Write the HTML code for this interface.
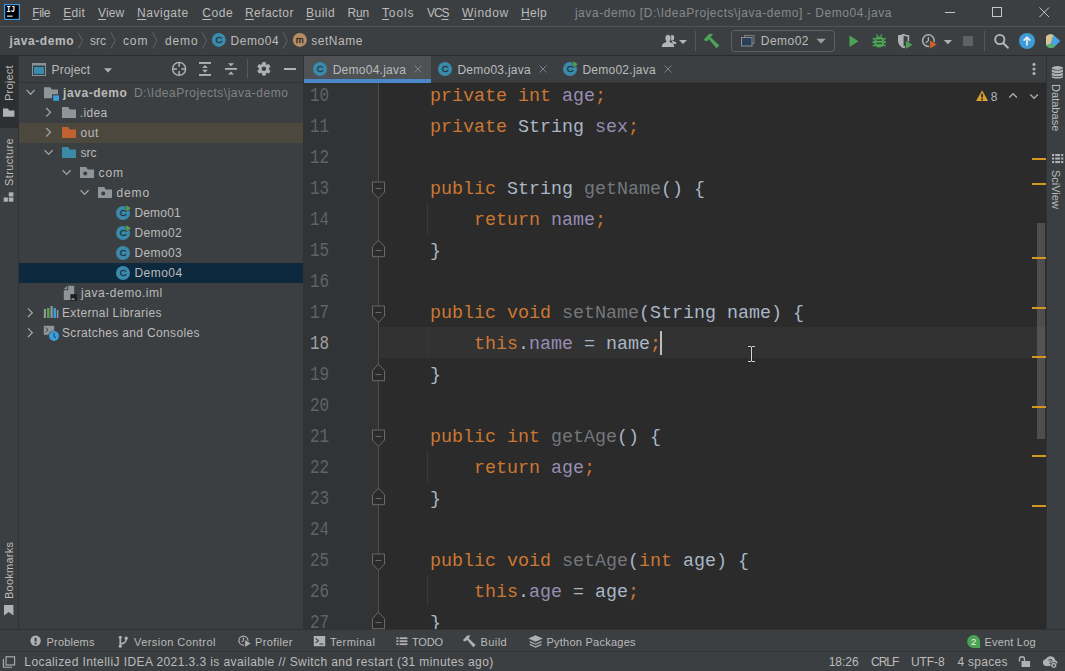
<!DOCTYPE html>
<html lang="en">
<head>
<meta charset="utf-8">
<title>java-demo - Demo04.java</title>
<style>
html,body{margin:0;padding:0;}
body{width:1065px;height:671px;overflow:hidden;background:#3c3f41;position:relative;
  font-family:"Liberation Sans","DejaVu Sans",sans-serif;font-size:12px;color:#bbbbbb;}
.abs{position:absolute;}
.t{position:absolute;white-space:pre;line-height:16px;height:16px;}
.t u{text-decoration:underline;text-decoration-thickness:1px;text-underline-offset:1.5px;}
#icons{position:absolute;left:0;top:0;width:1065px;height:671px;overflow:hidden;pointer-events:none;}
#menuline{left:0;top:26px;width:1065px;height:1px;background:#515354;}
#navline{left:0;top:55px;width:1065px;height:1px;background:#292b2c;}
#lstripe{left:0;top:56px;width:18px;height:574px;background:#3c3f41;border-right:1px solid #323232;}
#lsel{left:0;top:56px;width:18px;height:72px;background:#2d2f30;}
#rstripe{left:1046px;top:56px;width:19px;height:574px;background:#3c3f41;border-left:1px solid #323232;box-sizing:border-box;}
.vt{position:absolute;white-space:pre;font-size:12px;color:#bbbbbb;line-height:16px;height:16px;transform-origin:0 0;}
#proj{left:19px;top:56px;width:284px;height:574px;background:#3c3f41;}
#projhdrline{left:19px;top:82px;width:284px;height:1px;background:#313335;}
#rowout{left:19px;top:123px;width:285px;height:20px;background:#4c483d;}
#rowsel{left:19px;top:263px;width:285px;height:20px;background:#0d293e;}
#projsep{left:303px;top:56px;width:1px;height:574px;background:#323232;}
#tabs{left:304px;top:56px;width:742px;height:27px;background:#3c3f41;}
#tabbl{left:304px;top:82px;width:742px;height:1px;background:#323436;}
#tabact{left:304px;top:56px;width:127px;height:27px;background:#4e5254;}
#tabul{left:304px;top:79px;width:127px;height:4px;background:#4a88c7;}
#editor{left:304px;top:83px;width:742px;height:547px;background:#2b2b2b;overflow:hidden;}
#gutter{left:0;top:0;width:75px;height:547px;background:#313335;}
#gutline{left:74px;top:0;width:1px;height:547px;background:#4d4d4d;}
#caretrow{left:75px;top:244px;width:667px;height:31px;background:#323232;}
.ln{position:absolute;left:5.6px;transform-origin:0 60%;transform:scale(.87,1.07);font-family:"Liberation Mono","DejaVu Sans Mono",monospace;font-size:18.33px;line-height:31px;height:31px;color:#606366;white-space:pre;}
.cl{position:absolute;left:126px;font-family:"Liberation Mono","DejaVu Sans Mono",monospace;font-size:18.33px;line-height:31px;height:31px;color:#a9b7c6;white-space:pre;}
.k{color:#cc7832;}
.f{color:#968eb3;}
.un{color:#74777c;}
#ibeam{position:absolute;}
#caret{left:355.5px;top:248px;width:2px;height:24px;background:#bbbbbb;}
#sbthumb{left:733px;top:140px;width:8px;height:216px;background:rgba(140,142,140,.36);}
.ws{position:absolute;left:728px;width:14px;height:2px;background:#d3961f;}
.ig{position:absolute;left:123px;width:1px;height:31px;background:#393939;}
#botline{left:0;top:629px;width:1065px;height:1px;background:#323232;}
#bottombar{left:0;top:630px;width:1065px;height:21px;background:#3c3f41;}
#statline{left:0;top:651px;width:1065px;height:1px;background:#343638;}
#status{left:0;top:652px;width:1065px;height:19px;background:#3c3f41;}
</style>
</head>
<body>
<div id="menuline" class="abs"></div>
<div id="navline" class="abs"></div>
<div id="lstripe" class="abs"></div>
<div id="lsel" class="abs"></div>
<div id="proj" class="abs"></div>
<div id="projhdrline" class="abs"></div>
<div id="rowout" class="abs"></div>
<div id="rowsel" class="abs"></div>
<div id="projsep" class="abs"></div>
<div id="tabs" class="abs"></div>
<div id="tabbl" class="abs"></div>
<div id="tabact" class="abs"></div>
<div id="tabul" class="abs"></div>
<div id="editor" class="abs">
<div id="gutter" class="abs"></div>
<div id="caretrow" class="abs"></div>
<div id="gutline" class="abs"></div>
<div class="ln" style="top:-2.5px">10</div>
<div class="cl" style="top:-2.5px"><span class="k">private int </span><span class="f">age</span><span class="k">;</span></div>
<div class="ln" style="top:28.5px">11</div>
<div class="cl" style="top:28.5px"><span class="k">private </span>String <span class="f">sex</span><span class="k">;</span></div>
<div class="ln" style="top:59.5px">12</div>
<div class="ln" style="top:90.5px">13</div>
<div class="cl" style="top:90.5px"><span class="k">public </span>String <span class="un">getName</span>() {</div>
<div class="ln" style="top:121.5px">14</div>
<div class="cl" style="top:121.5px">    <span class="k">return </span><span class="f">name</span><span class="k">;</span></div>
<div class="ln" style="top:152.5px">15</div>
<div class="cl" style="top:152.5px">}</div>
<div class="ln" style="top:183.5px">16</div>
<div class="ln" style="top:214.5px">17</div>
<div class="cl" style="top:214.5px"><span class="k">public void </span><span class="un">setName</span>(String name) {</div>
<div class="ln" style="top:245.5px;color:#a4a3a3">18</div>
<div class="cl" style="top:245.5px">    <span class="k">this</span>.<span class="f">name</span> = name<span class="k">;</span></div>
<div class="ln" style="top:276.5px">19</div>
<div class="cl" style="top:276.5px">}</div>
<div class="ln" style="top:307.5px">20</div>
<div class="ln" style="top:338.5px">21</div>
<div class="cl" style="top:338.5px"><span class="k">public int </span><span class="un">getAge</span>() {</div>
<div class="ln" style="top:369.5px">22</div>
<div class="cl" style="top:369.5px">    <span class="k">return </span><span class="f">age</span><span class="k">;</span></div>
<div class="ln" style="top:400.5px">23</div>
<div class="cl" style="top:400.5px">}</div>
<div class="ln" style="top:431.5px">24</div>
<div class="ln" style="top:462.5px">25</div>
<div class="cl" style="top:462.5px"><span class="k">public void </span><span class="un">setAge</span>(<span class="k">int </span>age) {</div>
<div class="ln" style="top:493.5px">26</div>
<div class="cl" style="top:493.5px">    <span class="k">this</span>.<span class="f">age</span> = age<span class="k">;</span></div>
<div class="ln" style="top:524.5px">27</div>
<div class="cl" style="top:524.5px">}</div>
<div class="ig" style="top:120px"></div>
<div class="ig" style="top:244px"></div>
<div class="ig" style="top:368px"></div>
<div class="ig" style="top:492px"></div>
<div id="caret" class="abs"></div>
<div id="sbthumb" class="abs"></div>
<div class="ws" style="top:75px"></div><div class="ws" style="top:100px"></div><div class="ws" style="top:174px"></div><div class="ws" style="top:224px"></div><div class="ws" style="top:273px"></div><div class="ws" style="top:323px"></div><div class="ws" style="top:372px"></div><div class="ws" style="top:422px"></div>
</div>
<div id="rstripe" class="abs"></div>
<div id="botline" class="abs"></div>
<div id="bottombar" class="abs"></div>
<div id="statline" class="abs"></div>
<div id="status" class="abs"></div>
<div class="vt" style="left:1.49px;top:100.80px;transform:rotate(-90deg);letter-spacing:0.237px;font-size:11px;">Project</div>
<div class="vt" style="left:1.49px;top:185.80px;transform:rotate(-90deg);letter-spacing:0.374px;font-size:11px;">Structure</div>
<div class="vt" style="left:1.49px;top:598.80px;transform:rotate(-90deg);letter-spacing:0.235px;font-size:11px;">Bookmarks</div>
<div class="vt" style="left:1063.81px;top:83.60px;transform:rotate(90deg);letter-spacing:0.033px;font-size:11px;">Database</div>
<div class="vt" style="left:1063.81px;top:169.60px;transform:rotate(90deg);letter-spacing:-0.013px;font-size:11px;">SciView</div>
<div class="t" style="left:32.30px;top:4.84px;font-size:12px;letter-spacing:-0.421px;color:#bbbbbb;"><u>F</u>ile</div>
<div class="t" style="left:63.20px;top:4.84px;font-size:12px;letter-spacing:0.319px;color:#bbbbbb;"><u>E</u>dit</div>
<div class="t" style="left:98.00px;top:4.84px;font-size:12px;letter-spacing:0.124px;color:#bbbbbb;"><u>V</u>iew</div>
<div class="t" style="left:137.10px;top:4.84px;font-size:12px;letter-spacing:0.516px;color:#bbbbbb;"><u>N</u>avigate</div>
<div class="t" style="left:202.20px;top:4.84px;font-size:12px;letter-spacing:0.595px;color:#bbbbbb;"><u>C</u>ode</div>
<div class="t" style="left:244.90px;top:4.84px;font-size:12px;letter-spacing:0.464px;color:#bbbbbb;"><u>R</u>efactor</div>
<div class="t" style="left:306.00px;top:4.84px;font-size:12px;letter-spacing:0.498px;color:#bbbbbb;"><u>B</u>uild</div>
<div class="t" style="left:347.40px;top:4.84px;font-size:12px;letter-spacing:-0.070px;color:#bbbbbb;">R<u>u</u>n</div>
<div class="t" style="left:382.00px;top:4.84px;font-size:12px;letter-spacing:0.847px;color:#bbbbbb;"><u>T</u>ools</div>
<div class="t" style="left:427.00px;top:4.84px;font-size:12px;letter-spacing:-1.085px;color:#bbbbbb;">VC<u>S</u></div>
<div class="t" style="left:462.00px;top:4.84px;font-size:12px;letter-spacing:0.717px;color:#bbbbbb;"><u>W</u>indow</div>
<div class="t" style="left:521.00px;top:4.84px;font-size:12px;letter-spacing:0.331px;color:#bbbbbb;"><u>H</u>elp</div>
<div class="t" style="left:574.90px;top:4.84px;font-size:12px;letter-spacing:0.556px;color:#86898c;">java-demo [D:\IdeaProjects\java-demo] - Demo04.java</div>
<div class="t" style="left:9.50px;top:32.84px;font-size:12px;letter-spacing:0.584px;color:#bbbbbb;font-weight:bold;">java-demo</div>
<div class="t" style="left:90.00px;top:32.84px;font-size:12px;letter-spacing:0.002px;color:#bbbbbb;">src</div>
<div class="t" style="left:123.00px;top:32.84px;font-size:12px;letter-spacing:0.863px;color:#bbbbbb;">com</div>
<div class="t" style="left:165.00px;top:32.84px;font-size:12px;letter-spacing:0.885px;color:#bbbbbb;">demo</div>
<div class="t" style="left:230.60px;top:32.84px;font-size:12px;letter-spacing:0.543px;color:#bbbbbb;">Demo04</div>
<div class="t" style="left:311.30px;top:32.84px;font-size:12px;letter-spacing:0.509px;color:#bbbbbb;">setName</div>
<div class="t" style="left:760.80px;top:32.84px;font-size:12px;letter-spacing:0.463px;color:#bbbbbb;">Demo02</div>
<div class="t" style="left:51.50px;top:61.84px;font-size:12px;letter-spacing:0.214px;color:#bbbbbb;">Project</div>
<div class="t" style="left:332.70px;top:61.84px;font-size:12px;letter-spacing:0.257px;color:#bbbbbb;">Demo04.java</div>
<div class="t" style="left:457.40px;top:61.84px;font-size:12px;letter-spacing:0.257px;color:#bbbbbb;">Demo03.java</div>
<div class="t" style="left:582.40px;top:61.84px;font-size:12px;letter-spacing:0.257px;color:#bbbbbb;">Demo02.java</div>
<div class="t" style="left:63.00px;top:84.84px;font-size:12px;letter-spacing:0.572px;color:#bbbbbb;font-weight:bold;">java-demo</div>
<div class="t" style="left:133.90px;top:84.84px;font-size:12px;letter-spacing:0.524px;color:#7f8284;">D:\IdeaProjects\java-demo</div>
<div class="t" style="left:79.70px;top:104.84px;font-size:12px;letter-spacing:0.363px;color:#bbbbbb;">.idea</div>
<div class="t" style="left:80.50px;top:124.84px;font-size:12px;letter-spacing:0.576px;color:#bbbbbb;">out</div>
<div class="t" style="left:80.50px;top:144.84px;font-size:12px;letter-spacing:0.002px;color:#bbbbbb;">src</div>
<div class="t" style="left:98.50px;top:164.84px;font-size:12px;letter-spacing:0.913px;color:#bbbbbb;">com</div>
<div class="t" style="left:116.50px;top:184.84px;font-size:12px;letter-spacing:0.885px;color:#bbbbbb;">demo</div>
<div class="t" style="left:134.40px;top:204.84px;font-size:12px;letter-spacing:0.183px;color:#bbbbbb;">Demo01</div>
<div class="t" style="left:134.40px;top:224.84px;font-size:12px;letter-spacing:0.383px;color:#bbbbbb;">Demo02</div>
<div class="t" style="left:134.40px;top:244.84px;font-size:12px;letter-spacing:0.383px;color:#bbbbbb;">Demo03</div>
<div class="t" style="left:134.40px;top:264.84px;font-size:12px;letter-spacing:0.483px;color:#bbbbbb;">Demo04</div>
<div class="t" style="left:81.00px;top:284.84px;font-size:12px;letter-spacing:0.540px;color:#bbbbbb;">java-demo.iml</div>
<div class="t" style="left:62.00px;top:304.84px;font-size:12px;letter-spacing:0.360px;color:#bbbbbb;">External Libraries</div>
<div class="t" style="left:62.00px;top:324.84px;font-size:12px;letter-spacing:0.354px;color:#bbbbbb;">Scratches and Consoles</div>
<div class="t" style="left:46.50px;top:633.89px;font-size:11px;letter-spacing:0.220px;color:#bbbbbb;">Problems</div>
<div class="t" style="left:134.00px;top:633.89px;font-size:11px;letter-spacing:0.446px;color:#bbbbbb;">Version Control</div>
<div class="t" style="left:255.00px;top:633.89px;font-size:11px;letter-spacing:0.374px;color:#bbbbbb;">Profiler</div>
<div class="t" style="left:330.00px;top:633.89px;font-size:11px;letter-spacing:0.468px;color:#bbbbbb;">Terminal</div>
<div class="t" style="left:412.00px;top:633.89px;font-size:11px;letter-spacing:-0.207px;color:#bbbbbb;">TODO</div>
<div class="t" style="left:480.50px;top:633.89px;font-size:11px;letter-spacing:0.414px;color:#bbbbbb;">Build</div>
<div class="t" style="left:546.50px;top:633.89px;font-size:11px;letter-spacing:0.242px;color:#bbbbbb;">Python Packages</div>
<div class="t" style="left:984.40px;top:633.89px;font-size:11px;letter-spacing:0.210px;color:#bbbbbb;">Event Log</div>
<div class="t" style="left:24.30px;top:653.64px;font-size:12px;letter-spacing:0.419px;color:#bbbbbb;">Localized IntelliJ IDEA 2021.3.3 is available // Switch and restart (31 minutes ago)</div>
<div class="t" style="left:828.70px;top:653.64px;font-size:12px;letter-spacing:-0.014px;color:#bbbbbb;">18:26</div>
<div class="t" style="left:871.00px;top:653.64px;font-size:12px;letter-spacing:-1.002px;color:#bbbbbb;">CRLF</div>
<div class="t" style="left:911.00px;top:653.64px;font-size:12px;letter-spacing:-0.081px;color:#bbbbbb;">UTF-8</div>
<div class="t" style="left:957.40px;top:653.64px;font-size:12px;letter-spacing:0.296px;color:#bbbbbb;">4 spaces</div>
<div class="t" style="left:990.80px;top:88.84px;font-size:12px;letter-spacing:0.200px;color:#a9b7c6;">8</div>
<svg id="icons" viewBox="0 0 1065 671" width="1065" height="671">
<!-- IJ logo -->
<rect x="4" y="4" width="16" height="16" fill="#3a9be8"/><rect x="5.2" y="5.2" width="13.6" height="13.6" fill="#000"/>
<text x="6.500" y="12.300" font-family="Liberation Mono, DejaVu Sans Mono, monospace" font-weight="bold" font-size="8.6" fill="#fff" textLength="8.6" lengthAdjust="spacingAndGlyphs">IJ</text>
<rect x="7" y="15.6" width="5.6" height="1.1" fill="#fff"/>
<!-- window controls -->
<g stroke="#c4c6c8" stroke-width="1" fill="none">
<path d="M945 12.5H955"/><rect x="992.5" y="7.5" width="9" height="9"/><path d="M1039.5 7.5l9.5 9.5M1049 7.5l-9.5 9.5"/>
</g>
<!-- breadcrumb chevrons -->
<g stroke="#626567" stroke-width="1" fill="none">
<path d="M78 32.5l4.5 8l-4.5 8"/><path d="M110.8 32.5l4.5 8l-4.5 8"/><path d="M152.6 32.5l4.5 8l-4.5 8"/><path d="M202.2 32.5l4.5 8l-4.5 8"/><path d="M283 32.5l4.5 8l-4.5 8"/>
</g>
<!-- class / method icons -->
<g id="ci">
<circle cx="218.8" cy="39.9" r="7" fill="#3a8aab"/>
<text x="218.900" y="43.300" text-anchor="middle" font-family="Liberation Sans, DejaVu Sans, sans-serif" font-size="9.500" fill="#25343e" stroke="#25343e" stroke-width=".35">C</text>
</g>
<circle cx="299.8" cy="39.9" r="7" fill="#b58d63"/>
<text x="299.800" y="42.700" text-anchor="middle" font-family="Liberation Sans, DejaVu Sans, sans-serif" font-size="9.500" fill="#2f2a25" stroke="#2f2a25" stroke-width=".35">m</text>
<!-- toolbar: user icon -->
<g fill="#b3b5b7">
<ellipse cx="672.300" cy="37.700" rx="1.900" ry="2.800"/><path d="M671.600 40.400l4.600 1.900v1.700h-3.200z"/>
<ellipse cx="668" cy="38.200" rx="3" ry="3.700" stroke="#3c3f41" stroke-width=".7"/>
<path d="M661.800 47c0-3 1.800-4 4.200-4.700h4c2.400.7 4.200 1.700 4.200 4.700z"/><rect x="666.400" y="40.500" width="3.200" height="2.500"/>
<path d="M679 39.900h8l-4 4.200z"/>
</g>
<path d="M695.500 31V51" stroke="#555759" stroke-width="1"/>
<!-- hammer (build) -->
<path d="M703.900 39.400L709.200 33.800L713 34L710.700 37.300L719.300 45.400L716.500 48.200L708.800 39.200L707.200 41L705.100 41z" fill="#4ba354"/>
<!-- run config box -->
<rect x="731.5" y="30.5" width="103" height="21" rx="3" ry="3" fill="none" stroke="#5e6163" stroke-width="1"/>
<rect x="744.5" y="35.5" width="9.5" height="8" fill="none" stroke="#7a7d80" stroke-width="1"/>
<rect x="741.5" y="37.5" width="10.5" height="8.5" fill="#2c3f58" stroke="#8a8d90" stroke-width="1"/>
<path d="M816.4 38.8h9.4l-4.7 4.8z" fill="#9c9ea1"/>
<!-- run -->
<path d="M849.5 35.4l9 5.8l-9 5.8z" fill="#4ba354"/>
<!-- debug bug -->
<g fill="#4ba354">
<path d="M874.200 41.200a5 4.800 0 0 1 10 0v1.800a5 4.600 0 0 1 -10 0z"/>
<path d="M872.600 37.900h2.600v1.600h-2.600zM883.200 37.900h2.600v1.600h-2.600zM872.400 41.300h2.400v1.600h-2.400zM883.600 41.300h2.400v1.600h-2.400zM872.600 44.700h2.600v1.600h-2.600zM883.200 44.700h2.600v1.600h-2.600z"/>
<path d="M876.300 34.300l1.700 2.300M882.100 34.300l-1.700 2.300" stroke="#4ba354" stroke-width="1.200" fill="none"/>
</g>
<path d="M876.400 40.200h5.600M876.400 43.300h5.600" stroke="#3c3f41" stroke-width="1.200"/>
<!-- coverage shield -->
<path d="M898 35.2c2.6 0 4.2-.5 5.6-1.4c1.4.9 3 1.4 5.6 1.4v5c0 3.8-2.4 6.6-5.6 8c-3.2-1.4-5.6-4.2-5.6-8z" fill="#afb1b3"/>
<path d="M903.6 35.4c1 .5 2.4.9 4 1v4c0 2.700-1.6 4.800-4 6z" fill="#3c3f41"/>
<path d="M905.600 40.200l7.600 4.600l-7.600 4.600z" fill="#4ba354" stroke="#3c3f41" stroke-width=".8"/>
<!-- profiler -->
<circle cx="928.4" cy="40.6" r="5.8" fill="none" stroke="#afb1b3" stroke-width="1.5"/>
<path d="M928.4 37v3.800l-2.600 2" fill="none" stroke="#afb1b3" stroke-width="1.3"/>
<path d="M929.6 39.800l7.800 4.700l-7.800 4.700z" fill="#d0632b" stroke="#3c3f41" stroke-width=".9"/>
<path d="M943.8 40h8.200l-4.100 4.300z" fill="#afb1b3"/>
<!-- stop -->
<rect x="963" y="36" width="10" height="10" fill="#5f6162"/>
<path d="M984.500 31V51" stroke="#555759" stroke-width="1"/>
<!-- search -->
<circle cx="999.800" cy="39.500" r="4.600" fill="none" stroke="#b4b6b8" stroke-width="1.900"/>
<path d="M1003.200 43l4.500 4.600" stroke="#b4b6b8" stroke-width="2.200" stroke-linecap="round"/>
<!-- update -->
<circle cx="1027" cy="41" r="8" fill="#3d9bd6"/>
<path d="M1027 45.500v-8M1023.600 40.600l3.400-3.400l3.400 3.400" stroke="#e8eef3" stroke-width="1.700" fill="none"/>
<!-- plugin/code-with-me gem -->
<path d="M1046 36.500c2-2.500 5-3 7.500-1.500l6.500 6l-6 6.200c-3 1.600-6.500.5-8-2.200z" fill="#3d9bd6"/>
<path d="M1046 36.500c2-2.500 5-3 7.500-1.500l-3 9l-4.500 1z" fill="#d8c48c"/>
<path d="M1046 45c1.500 2.700 5 3.800 8 2.200l2-2.200l-5.500-1z" fill="#5fae6a"/>
<path d="M1053.500 35l6.500 6l-4 4l-5.500-1z" fill="#49a3e0"/>
<!-- ===== project header ===== -->
<rect x="32" y="63" width="14" height="13" fill="#87939a"/><rect x="33" y="65.600" width="12" height="9.400" fill="#2f3335"/><rect x="33.800" y="66.800" width="10.400" height="7.400" fill="#3a8aab"/>
<path d="M104 68.200h8l-4 4.400z" fill="#afb1b3"/>
<g stroke="#afb1b3" fill="none">
<circle cx="179.100" cy="68.900" r="6.500" stroke-width="1.400"/>
<path d="M179.100 62.400v4.300M179.100 71.100v4.300M172.600 68.900h4.300M181.300 68.900h4.300" stroke-width="1.500"/>
</g>
<g fill="#afb1b3">
<rect x="199" y="62" width="12" height="1.900"/><rect x="199" y="74" width="12" height="1.900"/>
<path d="M205 65l2.800 3h-5.600zM205 72.800l2.800-3h-5.600z"/>
<rect x="225" y="68" width="12" height="1.800"/>
<path d="M231 66.300l3-3.100h-6zM231 71.500l3 3.100h-6z"/>
<rect x="284" y="68" width="12" height="2"/>
</g>
<path d="M247.500 59V78.500" stroke="#555759" stroke-width="1"/>
<!-- gear -->
<path d="M262.26 64.39L262.55 62.44L265.25 62.44L265.54 64.39L266.90 65.18L268.73 64.45L270.08 66.79L268.53 68.02L268.53 69.58L270.08 70.81L268.73 73.15L266.90 72.42L265.54 73.21L265.25 75.16L262.55 75.16L262.26 73.21L260.90 72.42L259.07 73.15L257.72 70.81L259.27 69.58L259.27 68.02L257.72 66.79L259.07 64.45L260.90 65.18z" fill="#afb1b3" stroke="#afb1b3" stroke-width=".8" stroke-linejoin="round"/>
<circle cx="263.900" cy="68.800" r="2.300" fill="#3c3f41"/>
<!-- ===== tree chevrons ===== -->
<g stroke="#a0a3a6" stroke-width="1.300" fill="none">
<path d="M26.600 90l4 4.200l4-4.200"/>
<path d="M46.200 108l4.300 4.300l-4.300 4.300"/>
<path d="M46.200 128l4.300 4.300l-4.300 4.300"/>
<path d="M44.600 150.200l4 4.200l4-4.200"/>
<path d="M62.600 170.200l4 4.200l4-4.200"/>
<path d="M80.600 190.200l4 4.200l4-4.200"/>
<path d="M28 308.400l4.300 4.300l-4.300 4.300"/>
<path d="M28 328.400l4.300 4.300l-4.300 4.300"/>
</g>
<!-- folders -->
<path transform="translate(44,87.3)" d="M0 0h6.200l1.600 2.300h6.200v8.700h-14z" fill="#8e959b"/>
<rect x="52" y="94.300" width="8" height="7.400" fill="#3c3f41"/><rect x="53.200" y="95.400" width="5.800" height="5.400" fill="#3a9edb"/>
<path transform="translate(62,107.1)" d="M0 0h6.200l1.600 2.300h6.200v8.700h-14z" fill="#8e959b"/>
<path transform="translate(62,127.1)" d="M0 0h6.200l1.600 2.300h6.200v8.700h-14z" fill="#c0622f"/>
<path transform="translate(62,147.1)" d="M0 0h6.200l1.600 2.300h6.200v8.700h-14z" fill="#3a8ca6"/>
<path transform="translate(80,167.1)" d="M0 0h6.200l1.600 2.300h6.200v8.700h-14z" fill="#8e959b"/><circle cx="85.200" cy="173.500" r="2" fill="#3c3f41"/>
<path transform="translate(98,187.1)" d="M0 0h6.200l1.600 2.300h6.200v8.700h-14z" fill="#8e959b"/><circle cx="103.200" cy="193.500" r="2" fill="#3c3f41"/>
<!-- class icons in tree -->
<g font-family="Liberation Sans, DejaVu Sans, sans-serif" font-size="9.500" text-anchor="middle" stroke-width=".35">
<circle cx="123" cy="213" r="7" fill="#3a8aab"/><text x="123.100" y="216.400" fill="#25343e" stroke="#25343e">C</text>
<path d="M126 204.800l5.200 3.400l-5.200 3.600z" fill="#57a64a" stroke="#3c3f41" stroke-width=".6"/>
<circle cx="123" cy="233" r="7" fill="#3a8aab"/><text x="123.100" y="236.400" fill="#25343e" stroke="#25343e">C</text>
<path d="M126 224.800l5.200 3.400l-5.200 3.600z" fill="#57a64a" stroke="#3c3f41" stroke-width=".6"/>
<circle cx="123" cy="253" r="7" fill="#3a8aab"/><text x="123.100" y="256.400" fill="#25343e" stroke="#25343e">C</text>
<circle cx="123" cy="273" r="7" fill="#3a8aab"/><text x="123.100" y="276.400" fill="#25343e" stroke="#25343e">C</text>
<!-- tab icons -->
<circle cx="320" cy="69" r="7" fill="#3a8aab"/><text x="320.100" y="72.400" fill="#2b3b45" stroke="#2b3b45">C</text>
<circle cx="445" cy="69" r="7" fill="#3a8aab"/><text x="445.100" y="72.400" fill="#25343e" stroke="#25343e">C</text>
<circle cx="570" cy="69" r="7" fill="#3a8aab"/><text x="570.100" y="72.400" fill="#25343e" stroke="#25343e">C</text>
<path d="M573 60.800l5.200 3.400l-5.200 3.600z" fill="#57a64a" stroke="#3c3f41" stroke-width=".6"/>
</g>
<!-- tab close x -->
<g stroke="#7f8284" stroke-width="1" fill="none">
<path d="M414.500 65.500l7 7M421.500 65.500l-7 7"/><path d="M539.500 65.500l7 7M546.500 65.500l-7 7"/><path d="M664.500 65.500l7 7M671.500 65.500l-7 7"/>
</g>
<!-- tabs more -->
<g fill="#afb1b3"><circle cx="1034" cy="64.400" r="1.550"/><circle cx="1034" cy="69" r="1.550"/><circle cx="1034" cy="73.500" r="1.550"/></g>
<!-- iml file -->
<path d="M68.200 285.800h6v14.200h-10.400v-9.800h4.400z" fill="#8e959b"/><path d="M67.200 285.800v3.400h-3.400z" fill="#8e959b"/>
<rect x="70.400" y="294.200" width="6.600" height="6.600" fill="#1e1f20"/><rect x="71.500" y="298.600" width="3" height="1" fill="#e0e0e0"/>
<!-- external libraries -->
<g>
<rect x="43.800" y="309" width="2.200" height="9" fill="#8e959b"/><rect x="47" y="308" width="2.500" height="10" fill="#57a64a"/>
<rect x="50.500" y="306" width="2.200" height="12" fill="#8e959b"/><rect x="53.500" y="308" width="2.500" height="10" fill="#3a9edb"/><rect x="56.800" y="310" width="1.600" height="8" fill="#8e959b"/>
</g>
<!-- scratches -->
<rect x="43.800" y="325.800" width="10.400" height="9" fill="#8e959b"/>
<path d="M45.500 327.500l2.600 2.300l-2.600 2.300" stroke="#3c3f41" stroke-width="1" fill="none"/>
<circle cx="54" cy="336" r="5.600" fill="#3c3f41"/><circle cx="54" cy="336" r="4.900" fill="#3a9edb"/>
<path d="M54 333v3.200l1.800 1.600" stroke="#2b4a66" stroke-width="1.100" fill="none"/>
<!-- ===== fold markers ===== -->
<g fill="#2b2b2b" stroke="#696969" stroke-width="1">
<path d="M372.500 182.0h12v10.0l-6 6.3l-6 -6.3z"/><path d="M375.500 188.5h6" fill="none"/>
<path d="M372.500 306.0h12v10.0l-6 6.3l-6 -6.3z"/><path d="M375.500 312.5h6" fill="none"/>
<path d="M372.500 430.0h12v10.0l-6 6.3l-6 -6.3z"/><path d="M375.500 436.5h6" fill="none"/>
<path d="M372.500 554.0h12v10.0l-6 6.3l-6 -6.3z"/><path d="M375.500 560.5h6" fill="none"/>
<path d="M372.500 256.7h12v-10.2l-6 -6.4l-6 6.4z"/><path d="M375.500 250.5h6" fill="none"/>
<path d="M372.500 380.7h12v-10.2l-6 -6.4l-6 6.4z"/><path d="M375.500 374.5h6" fill="none"/>
<path d="M372.500 504.7h12v-10.2l-6 -6.4l-6 6.4z"/><path d="M375.500 498.5h6" fill="none"/>
<path d="M372.500 628.7h12v-10.2l-6 -6.4l-6 6.4z"/><path d="M375.500 622.5h6" fill="none"/>
</g>
<!-- ===== inspection widget ===== -->
<path d="M982.100 90.300l6 10.700h-12z" fill="#d6a02c"/>
<path d="M982.100 93.800v3.800M982.100 98.600v1.600" stroke="#2b2b2b" stroke-width="1.800"/>
<g stroke="#a6abaf" stroke-width="1.400" fill="none"><path d="M1009.300 97.600l3.800-3.800l3.800 3.800"/><path d="M1030.300 94.500l3.800 3.800l3.800-3.800"/></g>
<!-- ===== right stripe icons ===== -->
<g fill="#afb1b3">
<ellipse cx="1057.400" cy="68" rx="5.600" ry="1.900"/>
<path d="M1051.800 69.300c1 1.700 10.200 1.700 11.200 0v2.400c-1 1.700-10.200 1.700-11.200 0z"/>
<path d="M1051.800 72.500c1 1.700 10.200 1.700 11.200 0v2.400c-1 1.700-10.200 1.700-11.200 0z"/>
<path d="M1051.800 75.700c1 1.700 10.200 1.700 11.200 0v1.500c-1 1.700-10.200 1.700-11.200 0z"/>
<rect x="1052" y="154" width="2.100" height="2.100"/><rect x="1055.200" y="154" width="4.900" height="2.100"/><rect x="1061.200" y="154" width="2.100" height="2.100"/>
<rect x="1052" y="157.500" width="2.100" height="2.100"/><rect x="1055.200" y="157.500" width="4.900" height="2.100"/><rect x="1061.200" y="157.500" width="2.100" height="2.100"/>
<rect x="1052" y="161" width="2.100" height="2.100"/><rect x="1055.200" y="161" width="4.900" height="2.100"/><rect x="1061.200" y="161" width="2.100" height="2.100"/>
</g>
<!-- ===== left stripe icons ===== -->
<g fill="#afb1b3">
<path d="M3 108.400h4.800l1.400 2h5.200v6.400h-11.400z"/>
<rect x="8.800" y="192.300" width="4.600" height="4.200"/><rect x="3.700" y="197.500" width="4.200" height="4.200"/><rect x="8.800" y="197.500" width="4.600" height="4.200"/>
<path d="M4 605h9.400v10.600l-4.700-3.600l-4.700 3.600z"/>
</g>
<!-- ===== bottom bar icons ===== -->
<circle cx="35.600" cy="640.800" r="5.200" fill="#afb1b3"/><path d="M35.600 637.800v3.700M35.600 642.600v2" stroke="#3c3f41" stroke-width="2"/>
<g stroke="#afb1b3" fill="none" stroke-width="1.700">
<path d="M120.300 637.200v9M120.300 643.800c4.600-.2 5.800-1.800 5.900-5.400"/>
</g>
<g fill="#afb1b3"><circle cx="120.300" cy="637.200" r="1.500"/><circle cx="120.300" cy="646.200" r="1.600"/><circle cx="126.200" cy="638.200" r="1.600"/></g>
<circle cx="243.400" cy="640.500" r="4.500" fill="none" stroke="#afb1b3" stroke-width="1.250"/>
<path d="M243.400 637.600v3l-1.900 1.500" fill="none" stroke="#afb1b3" stroke-width="1.100"/>
<path d="M244.600 639.300l6.800 4.200l-6.800 4.200z" fill="#afb1b3" stroke="#3c3f41" stroke-width="1"/>
<rect x="313.800" y="636" width="11.400" height="10.200" fill="#afb1b3"/>
<path d="M315.600 638.300l2.800 2.400l-2.800 2.400M319.400 644h4" stroke="#3c3f41" stroke-width="1.100" fill="none"/>
<g fill="#afb1b3">
<rect x="396.400" y="637.300" width="2" height="1.800"/><rect x="399.600" y="637.300" width="7.800" height="1.800"/>
<rect x="396.400" y="640.300" width="2" height="1.800"/><rect x="399.600" y="640.300" width="7.800" height="1.800"/>
<rect x="396.400" y="643.300" width="2" height="1.800"/><rect x="399.600" y="643.300" width="7.800" height="1.800"/>
</g>
<g transform="translate(463,635.400) scale(.82) translate(-703.900,-33.800)"><path d="M703.900 39.400L709.200 33.800L713 34L710.700 37.300L719.300 45.400L716.500 48.200L708.800 39.200L707.200 41L705.100 41z" fill="#afb1b3"/></g>
<g fill="none" stroke="#afb1b3" stroke-width="1.200">
<path d="M535.600 636l5.800 2.600l-5.800 2.600l-5.800-2.600z" fill="#afb1b3"/>
<path d="M529.800 641.600l5.800 2.600l5.800-2.600M529.800 644.400l5.800 2.600l5.800-2.600"/>
</g>
<!-- event log badge -->
<path d="M973.600 635a6.500 6.500 0 1 0 0 13h6.500v-6.500a6.500 6.500 0 0 0 -6.500 -6.500z" fill="#4ba354"/>
<text x="973.600" y="645" text-anchor="middle" font-family="Liberation Sans, DejaVu Sans, sans-serif" font-size="9.500" fill="#f0f0f0">2</text>
<!-- ===== status icons ===== -->
<g fill="none" stroke="#afb1b3" stroke-width="1.100">
<rect x="6" y="656.800" width="8.600" height="8.200" fill="#3c3f41"/><path d="M3.400 659v8.200h8.600"/>
</g>
<rect x="1021.500" y="661" width="8.600" height="6" fill="#afb1b3"/>
<path d="M1019.500 661.500v-2.300a2.500 2.500 0 0 1 5 0v2" fill="none" stroke="#afb1b3" stroke-width="1.400"/>
<g fill="#afb1b3">
<path d="M1045.500 666a3.600 3.600 0 0 1 .4-7a5 5 0 0 1 9.400 1.200a3 3 0 0 1 2.200 3l-4 2.800z"/>
<circle cx="1053.800" cy="665.300" r="3" stroke="#3c3f41" stroke-width=".8"/>
</g>
<circle cx="1053.800" cy="665.300" r="1.100" fill="#3c3f41"/>
<text x="1050.200" y="663.800" text-anchor="middle" font-family="Liberation Sans, DejaVu Sans, sans-serif" font-weight="bold" font-size="8" fill="#3c3f41">?</text>
<!-- mouse I-beam -->
<path d="M748 346.500h3.200M751.800 346.500h3.200M748 361.500h3.200M751.800 361.500h3.200M751.500 347v14" stroke="#232323" stroke-width="2.600" fill="none" opacity=".7"/>
<path d="M748 346.500h3.200M751.800 346.500h3.200M748 361.500h3.200M751.800 361.500h3.200M751.500 347v14" stroke="#d6d6d6" stroke-width="1" fill="none"/>

</svg>
</body>
</html>
